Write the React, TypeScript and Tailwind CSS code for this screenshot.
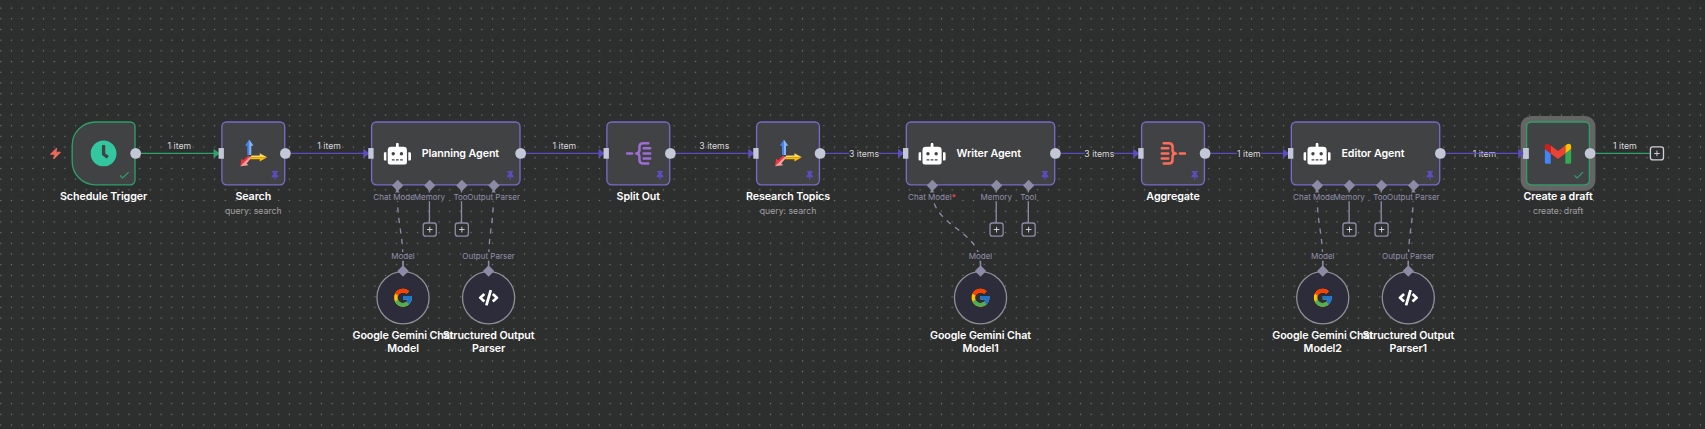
import React from "react";
import { FaRobot, FaClock, FaThumbtack, FaCode } from "react-icons/fa";
import { FcGoogle } from "react-icons/fc";

function SearchIcon() {
  return (
    <svg className="h-[42px] w-[42px]" viewBox="0 0 28 28">
      <path fill="#4285f4" d="M9.9 0.2 L5.8 6.4 H8 V15.7 H9.9Z" />
      <path fill="#8ab4f8" d="M9.9 0.2 L14.2 6.4 H12 V15.7 H9.9Z" />
      <path fill="#fdd663" d="M27.8 17.9 L20.4 13.8 V16.1 H12.3 L10.8 17.9Z" />
      <path fill="#fbbc04" d="M27.8 17.9 L20.4 22 V19.8 H11.2 L10.8 17.9Z" />
      <path fill="#f5333f" d="M1 26.8 L2.2 19.2 L4 20.8 L9.2 16 L10.6 17.3Z" />
      <path fill="#f6a09b" d="M1 26.8 L9.2 25.9 L7.3 24 L11.9 18.7 L10.6 17.3Z" />
    </svg>
  );
}

function BranchIcon({ className }: { className: string }) {
  return (
    <svg
      className={`h-[36px] w-[39px] ${className}`}
      viewBox="0 0 26 24"
      fill="none"
      stroke="currentColor"
      strokeWidth="2.5"
      strokeLinecap="round"
      strokeLinejoin="round"
    >
      <path d="M1.5 12H6.5" />
      <path d="M22.6 1.8H17.5Q13.8 1.8 13.8 5.3V8.6Q13.8 12 10.6 12Q13.8 12 13.8 15.4V18.7Q13.8 22.2 17.5 22.2H22.6" />
      <path d="M18 6.9H24.7M18 12H24.7M18 17.1H24.7" />
    </svg>
  );
}

function GmailIcon() {
  return (
    <svg className="h-[31px] w-[40px]" viewBox="52 42 88 66">
      <path fill="#4285f4" d="M58 108h14V74L52 59v43c0 3.32 2.69 6 6 6" />
      <path fill="#34a853" d="M120 108h14c3.32 0 6-2.69 6-6V59l-20 15" />
      <path fill="#fbbc04" d="M120 48v26l20-15v-8c0-7.42-8.47-11.65-14.4-7.2" />
      <path fill="#ea4335" d="M72 74V48l24 18 24-18v26L96 92" />
      <path fill="#c5221f" d="M52 51v8l20 15V48l-5.6-4.2c-5.94-4.45-14.4-.22-14.4 7.2" />
    </svg>
  );
}

function Check() {
  return (
    <svg className="absolute right-[7px] bottom-[7px] h-[13px] w-[16px]" viewBox="0 0 16 13">
      <path d="M1.5 6.8L5.6 10.8L14.5 2" fill="none" stroke="#2fa26a" strokeWidth="1.7" />
    </svg>
  );
}

function Pin() {
  return <FaThumbtack className="absolute right-[7px] bottom-[6px] h-[14px] w-[13px] text-[#5b4cc0]" />;
}

function InputPort() {
  return <div className="absolute top-[40px] left-[-4px] h-[16px] w-[8px] bg-[#c3c8d6]" />;
}

function OutputPort() {
  return <div className="absolute top-[40px] right-[-8px] h-[16px] w-[16px] rounded-full bg-[#c3c8d6]" />;
}

type NodeProps = {
  x: number;
  title: string;
  subtitle?: string;
  kind?: "pinned" | "trigger" | "selected";
  input?: boolean;
  children: React.ReactNode;
};

function StepNode({ x, title, subtitle, kind = "pinned", input = true, children }: NodeProps) {
  const shape =
    kind === "trigger"
      ? "rounded-l-[36px] rounded-r-[8px] border-[#2f9f68]"
      : kind === "selected"
        ? "rounded-[8px] border-[#2f9f68] shadow-[0_0_0_8px_#656565]"
        : "rounded-[8px] border-[#786bc8]";
  return (
    <div className="absolute top-0 w-[96px]" style={{ left: x }}>
      <div className={`relative flex h-[96px] w-[96px] items-center justify-center border-2 bg-[#414244] ${shape}`}>
        {children}
        {kind === "pinned" ? <Pin /> : <Check />}
      </div>
      <div className="absolute top-[102px] left-1/2 flex -translate-x-1/2 flex-col items-center whitespace-nowrap">
        <span className="text-[16px] leading-[20px] font-semibold tracking-[-0.14px] text-white">{title}</span>
        {subtitle && <span className="mt-[3px] text-[13px] leading-[18px] text-[#a0a0a0]">{subtitle}</span>}
      </div>
      {input && <InputPort />}
      <OutputPort />
    </div>
  );
}

function Diamond({ x, y }: { x: number; y: number }) {
  return (
    <div
      className="absolute h-[12px] w-[12px] -translate-x-1/2 -translate-y-1/2 rotate-45 bg-[#8c8ba6]"
      style={{ left: x, top: y }}
    />
  );
}

function PortLabel({ x, y, text, required }: { x: number; y: number; text: string; required?: boolean }) {
  return (
    <div
      className="absolute -translate-x-1/2 -translate-y-1/2 bg-[#2d2e2e] text-[12px] leading-[13px] whitespace-nowrap text-[#9391ad]"
      style={{ left: x, top: y }}
    >
      {text}
      {required && <span className="font-bold text-[#f2433f]">*</span>}
    </div>
  );
}

function PlusBox({ x, y, className }: { x: number; y: number; className: string }) {
  return (
    <svg
      className={`absolute h-[24px] w-[24px] -translate-x-1/2 -translate-y-1/2 ${className}`}
      style={{ left: x, top: y }}
      viewBox="0 0 24 24"
      fill="none"
      stroke="currentColor"
    >
      <rect x="2.2" y="2.2" width="19.6" height="19.6" rx="3.6" strokeWidth="2" fill="#2d2e2e" />
      <path d="M12 7.8V16.2M7.8 12H16.2" stroke="#c9cad4" strokeWidth="1.5" />
    </svg>
  );
}

type Port = { dx: number; label: string; required?: boolean; plus?: boolean };

function AgentNode({ x, title, ports }: { x: number; title: string; ports: Port[] }) {
  return (
    <>
      <div
        className="absolute top-0 flex h-[96px] w-[224px] items-center rounded-[8px] border-2 border-[#786bc8] bg-[#414244] pl-[17px]"
        style={{ left: x }}
      >
        <FaRobot className="h-[33px] w-[41px] text-white" />
        <span className="ml-[16px] text-[16px] leading-[20px] font-semibold tracking-[-0.14px] whitespace-nowrap text-white">
          {title}
        </span>
        <Pin />
      </div>
      <div className="absolute top-0 w-[224px]" style={{ left: x }}>
        <InputPort />
        <OutputPort />
      </div>
      {ports.map((p) => (
        <React.Fragment key={p.label}>
          <PortLabel x={x + p.dx} y={113.3} text={p.label} required={p.required} />
          <Diamond x={x + p.dx} y={96} />
          {p.plus && <PlusBox x={x + p.dx} y={162.4} className="text-[#8c8ba6]" />}
        </React.Fragment>
      ))}
    </>
  );
}

function SubNode({ x, label, title, icon }: { x: number; label: string; title: [string, string]; icon: "google" | "code" }) {
  return (
    <>
      <PortLabel x={x} y={201.5} text={label} />
      <div
        className="absolute top-[224px] flex h-[80px] w-[80px] -translate-x-1/2 items-center justify-center rounded-full border-2 border-[#8e8e93] bg-[#2c2c3a]"
        style={{ left: x }}
      >
        {icon === "google" ? (
          <FcGoogle className="h-[32px] w-[32px]" />
        ) : (
          <FaCode className="h-[24px] w-[30px] text-white" />
        )}
      </div>
      <Diamond x={x} y={224} />
      <div
        className="absolute top-[310.5px] -translate-x-1/2 text-center text-[16px] leading-[19.5px] font-semibold tracking-[-0.14px] whitespace-nowrap text-white"
        style={{ left: x }}
      >
        {title[0]}
        <br />
        {title[1]}
      </div>
    </>
  );
}

function EdgeLabel({ x, text, inline }: { x: number; text: string; inline?: boolean }) {
  return (
    <div
      className={`absolute -translate-x-1/2 -translate-y-1/2 text-[13px] leading-[14px] whitespace-nowrap text-[#d8d8da] ${inline ? "top-[47.5px] bg-[#2d2e2e]" : "top-[35.5px]"}`}
      style={{ left: x }}
    >
      {text}
    </div>
  );
}

const GREEN = "#2fa26a";
const PURPLE = "#5b4cc0";
const PORT = "#8c8ba6";

const mainEdges = [
  { from: 104, to: 224, color: GREEN },
  { from: 328, to: 448, color: PURPLE },
  { from: 680, to: 800, color: PURPLE },
  { from: 904, to: 1024, color: PURPLE },
  { from: 1128, to: 1248, color: PURPLE },
  { from: 1480, to: 1600, color: PURPLE },
  { from: 1704, to: 1824, color: PURPLE },
];

const dashedEdges = [
  [487.5, 496],
  [631.5, 624],
  [1287.5, 1360],
  [1863.5, 1872],
  [2007.5, 2000],
];

const stems = [535.5, 583.5, 1383.5, 1431.5, 1911.5, 1959.5];

function MainEdge({ from, to, color }: { from: number; to: number; color: string }) {
  return (
    <g>
      <path d={`M${from} 48H${to - 7}`} stroke={color} strokeWidth="2" />
      <path d={`M${to - 11.5} 41L${to - 2} 48L${to - 11.5} 55Z`} fill={color} />
    </g>
  );
}

function Edges() {
  return (
    <svg className="absolute top-0 left-0 h-px w-px overflow-visible" fill="none">
      {mainEdges.map((e) => (
        <MainEdge key={e.from} {...e} />
      ))}
      <path d="M2280 48H2361" stroke={GREEN} strokeWidth="2" />
      {dashedEdges.map(([a, b]) => (
        <g key={a}>
          <path d={`M${b} 216C${b} 160 ${a} 160 ${a} 104`} stroke={PORT} strokeWidth="2" strokeDasharray="8 8" />
          <path d={`M${b} 204V220`} stroke={PORT} strokeWidth="2" />
          <path d={`M${a - 5} 109.5L${a} 101L${a + 5} 109.5Z`} fill={PORT} />
        </g>
      ))}
      {stems.map((x) => (
        <path key={x} d={`M${x} 100V152`} stroke={PORT} strokeWidth="2" />
      ))}
    </svg>
  );
}

function DotGrid() {
  return (
    <svg className="absolute inset-0 h-full w-full">
      <pattern id="dots" x="6.1" y="2.75" width="10.69" height="10.69" patternUnits="userSpaceOnUse">
        <circle cx="5.35" cy="5.35" r="0.7" fill="#757676" />
      </pattern>
      <rect width="100%" height="100%" fill="url(#dots)" />
    </svg>
  );
}

const fourPorts: Port[] = [
  { dx: 39.5, label: "Chat Model", required: true },
  { dx: 87.5, label: "Memory", plus: true },
  { dx: 135.5, label: "Tool", plus: true },
  { dx: 183.5, label: "Output Parser" },
];

const threePorts: Port[] = [
  { dx: 39.5, label: "Chat Model", required: true },
  { dx: 135.5, label: "Memory", plus: true },
  { dx: 183.5, label: "Tool", plus: true },
];

export default function App() {
  return (
    <main className="relative h-[429px] w-[1705px] overflow-hidden bg-[#2d2e2e] font-['Inter',sans-serif]">
      <DotGrid />
      <div className="absolute top-0 left-0 h-[420px] w-[2440px] origin-top-left translate-x-[71.5px] translate-y-[121.3px] scale-[0.6684]">
        <Edges />

        <EdgeLabel x={161.3} text="1 item" />
        <EdgeLabel x={385.4} text="1 item" />
        <EdgeLabel x={737.3} text="1 item" />
        <EdgeLabel x={961.7} text="3 items" />
        <EdgeLabel x={1185.7} text="3 items" inline />
        <EdgeLabel x={1537.7} text="3 items" inline />
        <EdgeLabel x={1761.4} text="1 item" inline />
        <EdgeLabel x={2113.9} text="1 item" inline />
        <EdgeLabel x={2324} text="1 item" />

        <svg
          className="absolute top-[38.5px] left-[-33.5px] h-[18px] w-[18px] text-[#ee6a5c]"
          viewBox="2 2 20 20"
          fill="currentColor"
          stroke="currentColor"
          strokeWidth="1.4"
          strokeLinejoin="round"
        >
          <path d="M14 3L3.5 13.5H10.5L9 21.5L20.5 10H13Z" />
        </svg>

        <StepNode x={0} title="Schedule Trigger" kind="trigger" input={false}>
          <FaClock className="h-[40px] w-[40px] text-[#33c7a0]" />
        </StepNode>
        <StepNode x={224} title="Search" subtitle="query: search">
          <SearchIcon />
        </StepNode>
        <AgentNode x={448} title="Planning Agent" ports={fourPorts} />
        <StepNode x={800} title="Split Out">
          <BranchIcon className="text-[#9b6dd5]" />
        </StepNode>
        <StepNode x={1024} title="Research Topics" subtitle="query: search">
          <SearchIcon />
        </StepNode>
        <AgentNode x={1248} title="Writer Agent" ports={threePorts} />
        <StepNode x={1600} title="Aggregate">
          <BranchIcon className="-scale-x-100 text-[#ff6d5a]" />
        </StepNode>
        <AgentNode x={1824} title="Editor Agent" ports={fourPorts} />
        <StepNode x={2176} title="Create a draft" subtitle="create: draft" kind="selected">
          <GmailIcon />
        </StepNode>

        <svg className="absolute top-0 left-0 h-px w-px overflow-visible" fill="none">
          <MainEdge from={2056} to={2176} color={PURPLE} />
          <rect x="2172" y="40" width="8" height="16" fill="#c3c8d6" />
        </svg>
        <PlusBox x={2372} y={48.2} className="text-[#cfd0d6]" />

        <SubNode x={496} label="Model" title={["Google Gemini Chat", "Model"]} icon="google" />
        <SubNode x={624} label="Output Parser" title={["Structured Output", "Parser"]} icon="code" />
        <SubNode x={1360} label="Model" title={["Google Gemini Chat", "Model1"]} icon="google" />
        <SubNode x={1872} label="Model" title={["Google Gemini Chat", "Model2"]} icon="google" />
        <SubNode x={2000} label="Output Parser" title={["Structured Output", "Parser1"]} icon="code" />
      </div>
    </main>
  );
}
